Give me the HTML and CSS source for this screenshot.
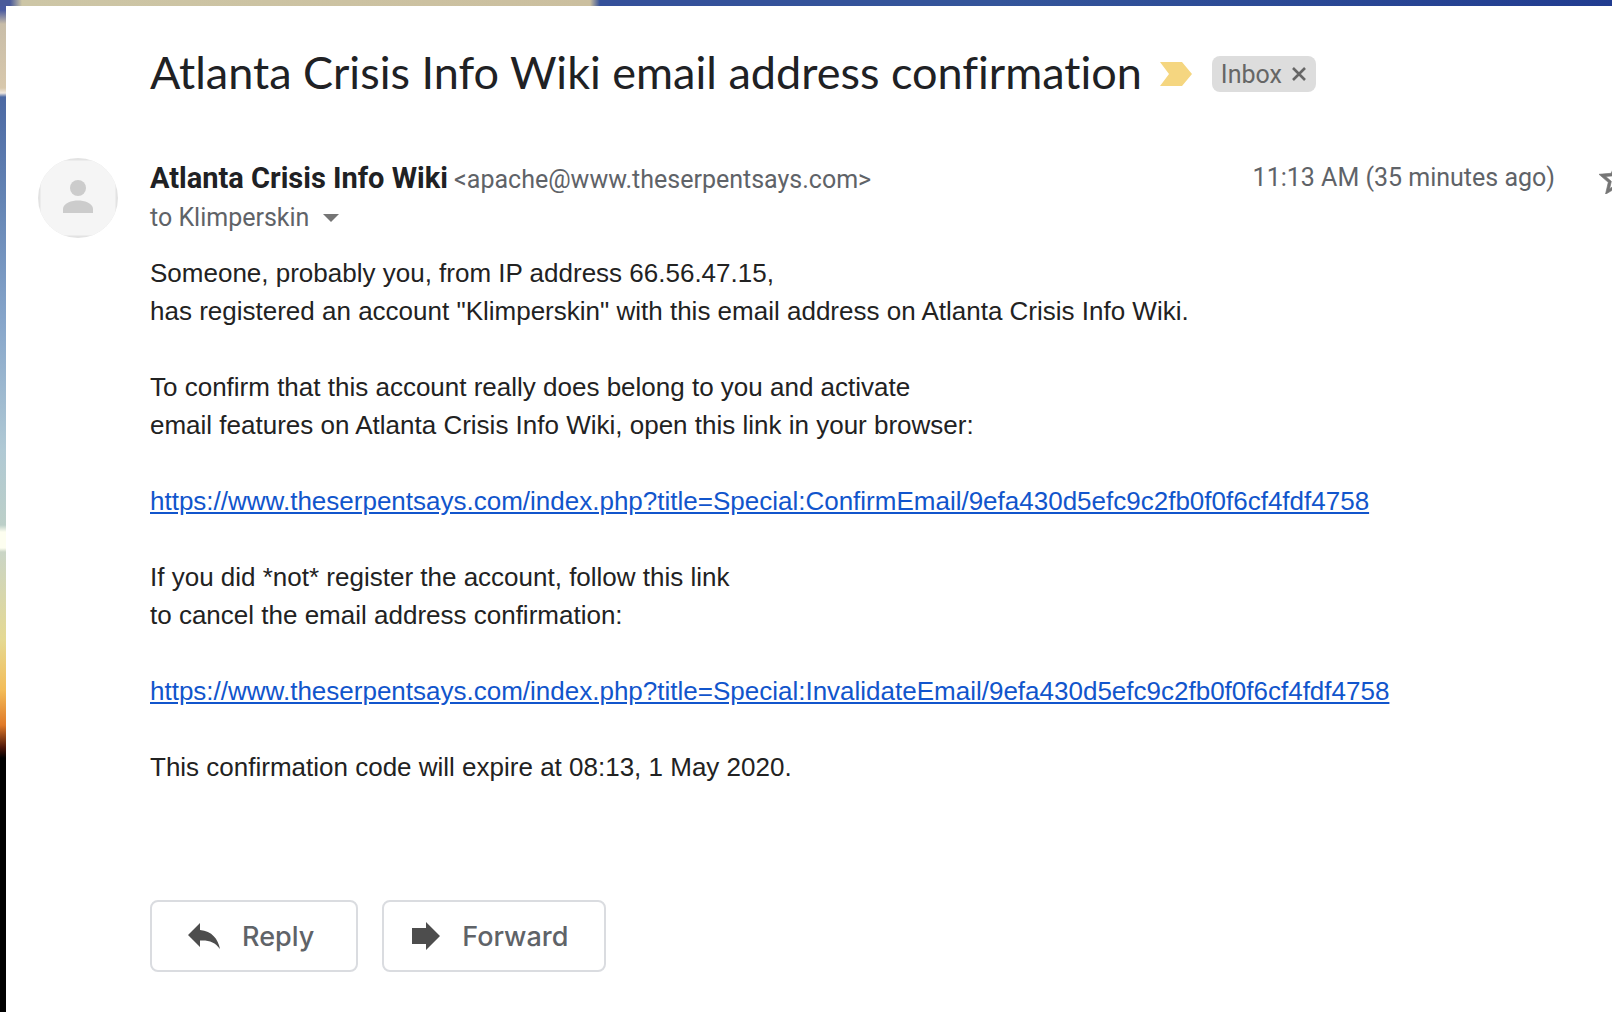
FILE: index.html
```html
<!DOCTYPE html>
<html lang="en">
<head>
    <meta charset="utf-8">
    <title>Atlanta Crisis Info Wiki email address confirmation</title>
    <link rel="stylesheet" href="styles.css">
</head>
<body>
    <main class="message">
        <div class="subject">
            <h1>Atlanta Crisis Info Wiki email address confirmation</h1>
            <svg class="important" viewBox="0 0 32 24" aria-hidden="true">
                <path d="M0 0h22l10 12-10 12H0l9-12z" fill="#f5d680"/>
            </svg>
            <button type="button" class="label">
                Inbox
                <svg viewBox="0 0 14 14" aria-hidden="true">
                    <path d="M1 1l12 12M13 1L1 13" stroke="#666" stroke-width="2.6"/>
                </svg>
            </button>
        </div>

        <div class="sender">
            <svg class="avatar" viewBox="0 0 80 80" aria-hidden="true">
                <clipPath id="round"><circle cx="40" cy="40" r="40"/></clipPath>
                <g clip-path="url(#round)">
                    <rect width="80" height="80" fill="#e3e3e3"/>
                    <rect x="2.5" y="2.5" width="75" height="75" fill="#f5f5f5"/>
                </g>
                <circle cx="40" cy="30" r="8" fill="#ccc"/>
                <path d="M25 55v-4c0-6 9-8.500 15-8.500s15 2.500 15 8.500v4z" fill="#ccc"/>
            </svg>
            <div class="names">
                <div class="from"><strong>Atlanta Crisis Info Wiki</strong> <span>&lt;apache@www.theserpentsays.com&gt;</span></div>
                <button type="button" class="to">
                    to Klimperskin
                    <svg viewBox="0 0 16 8" aria-hidden="true"><path d="M0 0h16L8 8z" fill="#757575"/></svg>
                </button>
            </div>
            <span class="date">11:13 AM (35 minutes ago)</span>
            <button type="button" class="star" aria-label="Not starred">
                <svg viewBox="2 2 20 19" aria-hidden="true">
                    <path d="M22 9.240l-7.190-.620L12 2 9.190 8.630 2 9.240l5.460 4.730L5.820 21 12 17.270 18.180 21l-1.630-7.030L22 9.240zM12 15.400l-3.760 2.270 1-4.280-3.320-2.880 4.380-.380L12 6.100l1.710 4.040 4.380.380-3.320 2.880 1 4.280L12 15.400z" fill="#757575" stroke="#757575" stroke-width=".4"/>
                </svg>
            </button>
        </div>

        <div class="content">
            <p>Someone, probably you, from IP address 66.56.47.15,<br>
            has registered an account "Klimperskin" with this email address on Atlanta Crisis Info Wiki.</p>

            <p>To confirm that this account really does belong to you and activate<br>
            email features on Atlanta Crisis Info Wiki, open this link in your browser:</p>

            <p><a href="#confirm">https://www.theserpentsays.com/index.php?title=Special:ConfirmEmail/9efa430d5efc9c2fb0f0f6cf4fdf4758</a></p>

            <p>If you did *not* register the account, follow this link<br>
            to cancel the email address confirmation:</p>

            <p><a href="#invalidate">https://www.theserpentsays.com/index.php?title=Special:InvalidateEmail/9efa430d5efc9c2fb0f0f6cf4fdf4758</a></p>

            <p>This confirmation code will expire at 08:13, 1 May 2020.</p>
        </div>

        <div class="actions">
            <button type="button" class="reply">
                <svg viewBox="0 0 32 26" aria-hidden="true">
                    <path d="M0 12L12 0v7c12 1 18 9 20 19-5-7-11-9-20-8.500V24z" fill="#4d4d4d"/>
                </svg>
                Reply
            </button>
            <button type="button" class="forward">
                <svg viewBox="0 0 28 28" aria-hidden="true">
                    <path d="M0 6h14V0l14 14-14 14v-6H0z" fill="#4d4d4d"/>
                </svg>
                Forward
            </button>
        </div>
    </main>
</body>
</html>
```
FILE: styles.css
```css
* {
    box-sizing: border-box;
}

body {
    margin: 0;
    padding: 6px 0 0 6px;
    min-height: 100vh;
    display: flex;
    overflow-x: hidden;
    font-family: Roboto, sans-serif;
    color: #202124;
    /* sunset wallpaper behind the message: top edge, then left edge */
    background:
        linear-gradient(to right, #4a5a9a 0, #4a5a9a 10px, #cdc6a6 22px, #cbbf9f 590px, #34509a 600px, #34559a 1000px, #213c90 100%) top / 100% 6px no-repeat,
        linear-gradient(#4a5aa0 10px, #c8bda8 24px, #d8c8ac 88px, #f0e8e0 93px, #4c69a3 97px, #6484b4 200px, #86a5ca 320px, #b0c9d4 450px, #bccfc8 525px, #fdfef0 532px, #fdfef0 548px, #cad5c6 552px, #e5d992 640px, #f3bc58 690px, #e07a28 725px, #4a1408 748px, #000 758px) #000;
}

button {
    font: inherit;
    cursor: pointer;
}

svg {
    flex-shrink: 0;
}

.message {
    flex: 1;
    min-width: 0;
    padding: 40px 0 40px 144px;
    background-color: #fff;
}

.subject {
    display: flex;
    align-items: center;
    height: 56px;
}

h1 {
    margin: 0;
    padding-bottom: 4px;
    font-family: Lato, sans-serif;
    font-size: 45px;
    font-weight: 400;
    font-variant-ligatures: none;
    white-space: nowrap;
}

.important {
    width: 32px;
    height: 24px;
    margin: 0 20px 0 18px;
}

.label {
    display: flex;
    align-items: center;
    gap: 10px;
    height: 36px;
    padding: 0 10px 0 9px;
    border: none;
    border-radius: 8px;
    background-color: #ddd;
    color: #666;
    font-size: 25px;
}

.label svg {
    width: 14px;
}

.sender {
    display: flex;
    margin: 56px 0 0 -112px;
    font-size: 25px;
    line-height: 40px;
    color: #5f6368;
}

.avatar {
    width: 80px;
    height: 80px;
    margin-right: 32px;
}

.names {
    flex: 1;
    white-space: nowrap;
}

.from {
    height: 40px;
}

.from strong {
    font-size: 29px;
    font-weight: 700;
    color: #202124;
}

.to {
    display: flex;
    align-items: center;
    gap: 14px;
    padding: 0;
    border: none;
    background: none;
    color: inherit;
    line-height: 40px;
}

.to svg {
    width: 16px;
}

.date {
    white-space: nowrap;
}

/* the star runs past the right edge */
.star {
    width: 57px;
    height: 40px;
    padding: 0 0 0 44px;
    border: none;
    background: none;
    overflow: hidden;
    display: flex;
    align-items: center;
}

.star svg {
    width: 34px;
}

.content {
    margin-top: 16px;
    font-family: "Liberation Sans", Arial, sans-serif;
    font-size: 26px;
    line-height: 38px;
    color: #222;
}

.content p {
    margin: 0 0 38px;
}

.content a {
    color: #15c;
}

.actions {
    display: flex;
    gap: 24px;
    margin-top: 114px;
}

.actions button {
    display: flex;
    align-items: center;
    gap: 22px;
    height: 72px;
    border: 2px solid #dadce0;
    border-radius: 8px;
    background-color: #fff;
    color: #5f6368;
    font-family: Inter, sans-serif;
    font-size: 27px;
    font-weight: 500;
}

.actions .reply {
    padding: 0 42px 0 36px;
}

.actions .forward {
    padding: 0 36px 0 28px;
}

.reply svg {
    width: 32px;
}

.forward svg {
    width: 28px;
}
```
